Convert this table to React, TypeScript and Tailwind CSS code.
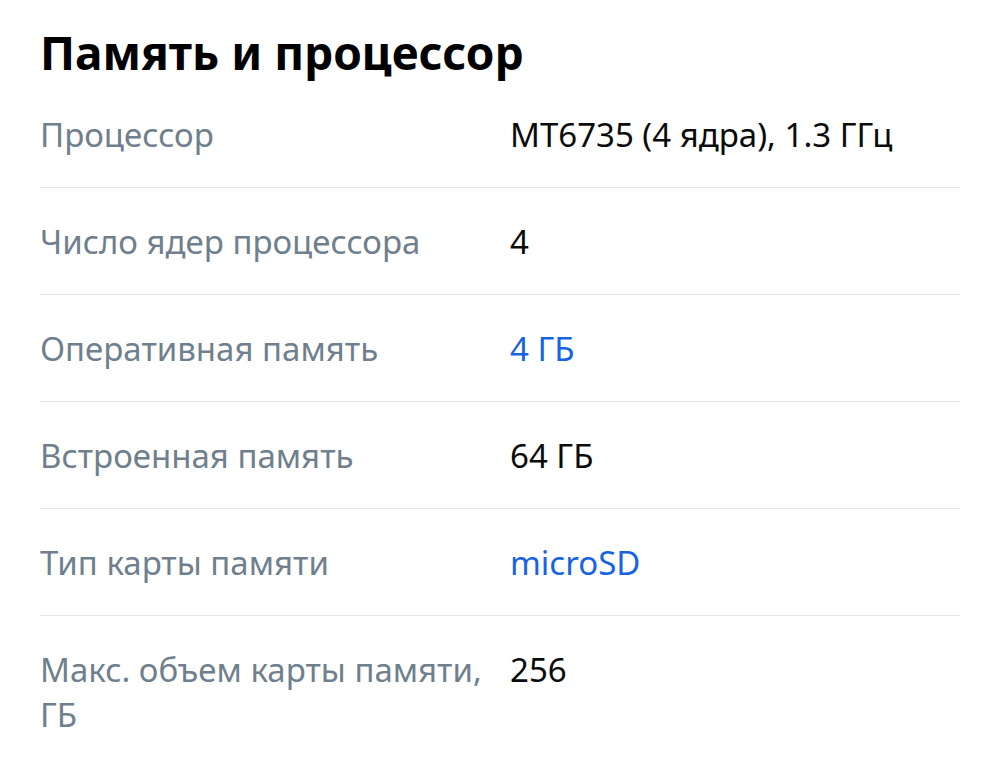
import React from "react";

type Row = { label: React.ReactNode; value: string; link?: boolean };

const rows: Row[] = [
  { label: "Процессор", value: "MT6735 (4 ядра), 1.3 ГГц" },
  { label: "Число ядер процессора", value: "4" },
  { label: "Оперативная память", value: "4 ГБ", link: true },
  { label: "Встроенная память", value: "64 ГБ" },
  { label: "Тип карты памяти", value: "microSD", link: true },
  { label: "Макс. объем карты памяти, ГБ", value: "256" },
];

export default function App() {
  return (
    <div
      className="min-h-[767px] w-[1000px] bg-white px-10 pt-[23px]"
      style={{ fontFamily: '"Noto Sans", "Liberation Sans", sans-serif' }}
    >
      <h1 className="text-[46px] font-bold leading-[58px] text-[#000000]">
        Память и процессор
      </h1>
      <div className="w-[920px]">
        {rows.map((r, i) => (
          <div
            key={i}
            className={`flex pt-[31px] pb-[30px] text-[33px] leading-[45px] ${
              i < rows.length - 1 ? "border-b border-[#e3e7ec]" : ""
            }`}
          >
            <div className="w-[470px] pr-4 text-[#707f8d]">{r.label}</div>
            <div className={r.link ? "text-[#1763e3]" : "text-[#0b0b0b]"}>
              {r.value}
            </div>
          </div>
        ))}
      </div>
    </div>
  );
}
